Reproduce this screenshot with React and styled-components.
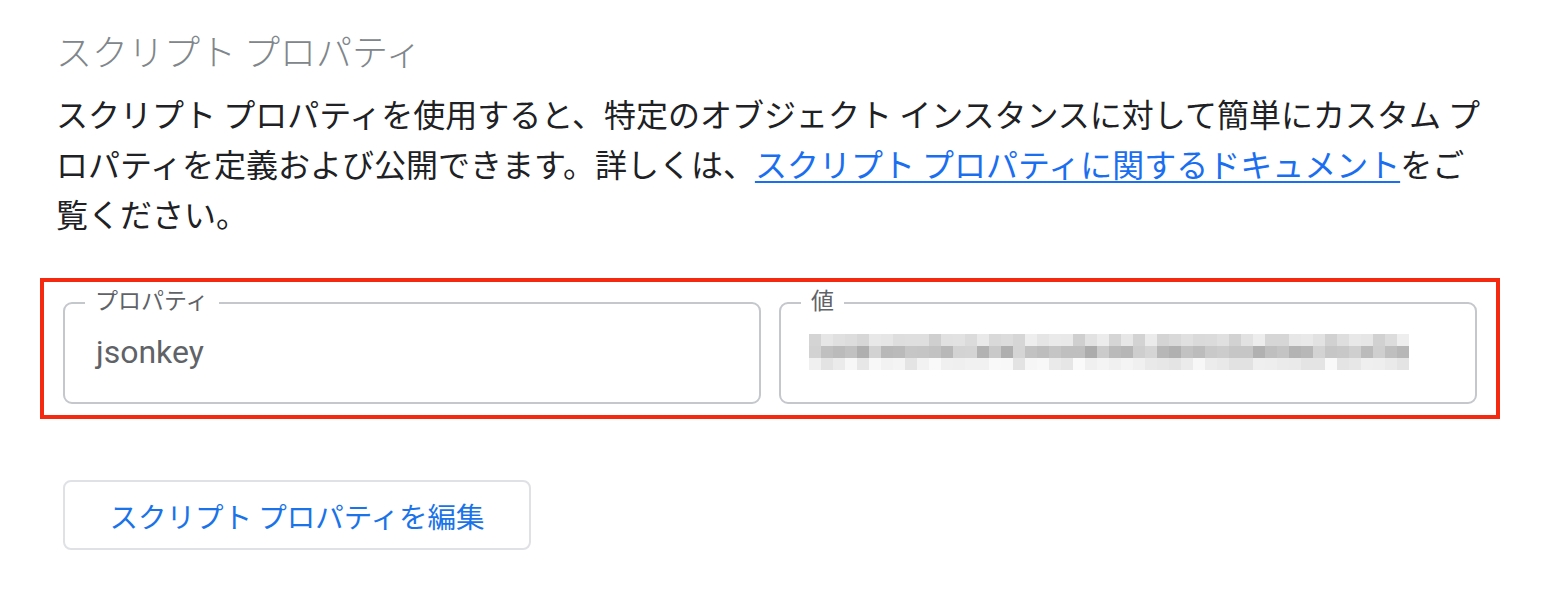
import styled, { createGlobalStyle } from "styled-components";

const GlobalStyle = createGlobalStyle`
  body {
    margin: 0;
    background: #fff;
    font-family: "Roboto", "Noto Sans CJK JP", sans-serif;
  }
`;

const Page = styled.div`
  width: 1434px;
  padding: 26px 0 40px 56px;
`;

const Title = styled.h2`
  margin: 0 0 14px;
  font-size: 36px;
  line-height: 48px;
  font-weight: 300;
  color: #80868b;
  font-family: "Noto Sans CJK JP", sans-serif;
`;

const Description = styled.p`
  margin: 0;
  font-size: 32px;
  line-height: 50px;
  color: #202124;
  font-family: "Noto Sans CJK JP", sans-serif;
`;

const DocLink = styled.a`
  color: #1a6ef0;
  text-decoration: underline;
  text-decoration-thickness: 2px;
  text-underline-offset: 4px;
`;

const Highlight = styled.div`
  box-sizing: border-box;
  width: 1460px;
  margin: 40px 0 0 -16px;
  padding: 5px 19px 11px;
  border: 4px solid #f5290f;
  display: grid;
  grid-template-columns: 1fr 1fr;
  gap: 18px;
`;

const Field = styled.fieldset`
  margin: 0;
  min-width: 0;
  padding: 0 20px 25px;
  border: 2px solid #c4c7cb;
  border-radius: 9px;
`;

const Label = styled.legend`
  padding: 0 10px 8px;
  font-size: 23px;
  line-height: 24px;
  color: #5f6368;
  font-family: "Noto Sans CJK JP", sans-serif;
`;

const Value = styled.div`
  margin-top: 8px;
  padding-left: 11px;
  height: 50px;
  display: flex;
  align-items: center;
  font-size: 32px;
  color: #5f6368;
  font-family: "Roboto", sans-serif;
`;

const Pixels = styled.div`
  display: grid;
  grid-template-columns: repeat(50, 12px);
  grid-auto-rows: 12px;
  margin-left: -3px;
`;

const Cell = styled.span`
  display: block;
`;

const Button = styled.button`
  box-sizing: border-box;
  margin: 61px 0 0 7px;
  width: 468px;
  height: 70px;
  border: 2px solid #dfe1e5;
  border-radius: 8px;
  background: #fff;
  color: #1a73e8;
  font-size: 28.5px;
  font-family: "Noto Sans CJK JP", sans-serif;
  cursor: pointer;
`;

// fake pixelated (masked) secret value
const seed = (i) => {
  const x = Math.sin(i * 12.9898 + 78.233) * 43758.5453;
  return x - Math.floor(x);
};
const rowTone = [
  [206, 238],
  [172, 214],
  [226, 250],
];
const cells = [];
for (let r = 0; r < 3; r++) {
  for (let c = 0; c < 50; c++) {
    const [lo, hi] = rowTone[r];
    const v = Math.round(lo + seed(r * 50 + c) * (hi - lo));
    cells.push(`rgb(${v},${v},${v + 1})`);
  }
}

export default function App() {
  return (
    <>
      <GlobalStyle />
      <Page>
        <Title>スクリプト プロパティ</Title>
        <Description>
          スクリプト プロパティを使用すると、特定のオブジェクト インスタンスに対して簡単にカスタム プロパティを定義および公開できます。詳しくは、
          <DocLink href="#">スクリプト プロパティに関するドキュメント</DocLink>
          をご覧ください。
        </Description>
        <Highlight>
          <Field>
            <Label>プロパティ</Label>
            <Value>jsonkey</Value>
          </Field>
          <Field>
            <Label>値</Label>
            <Value>
              <Pixels>
                {cells.map((bg, i) => (
                  <Cell key={i} style={{ background: bg }} />
                ))}
              </Pixels>
            </Value>
          </Field>
        </Highlight>
        <Button>スクリプト プロパティを編集</Button>
      </Page>
    </>
  );
}
